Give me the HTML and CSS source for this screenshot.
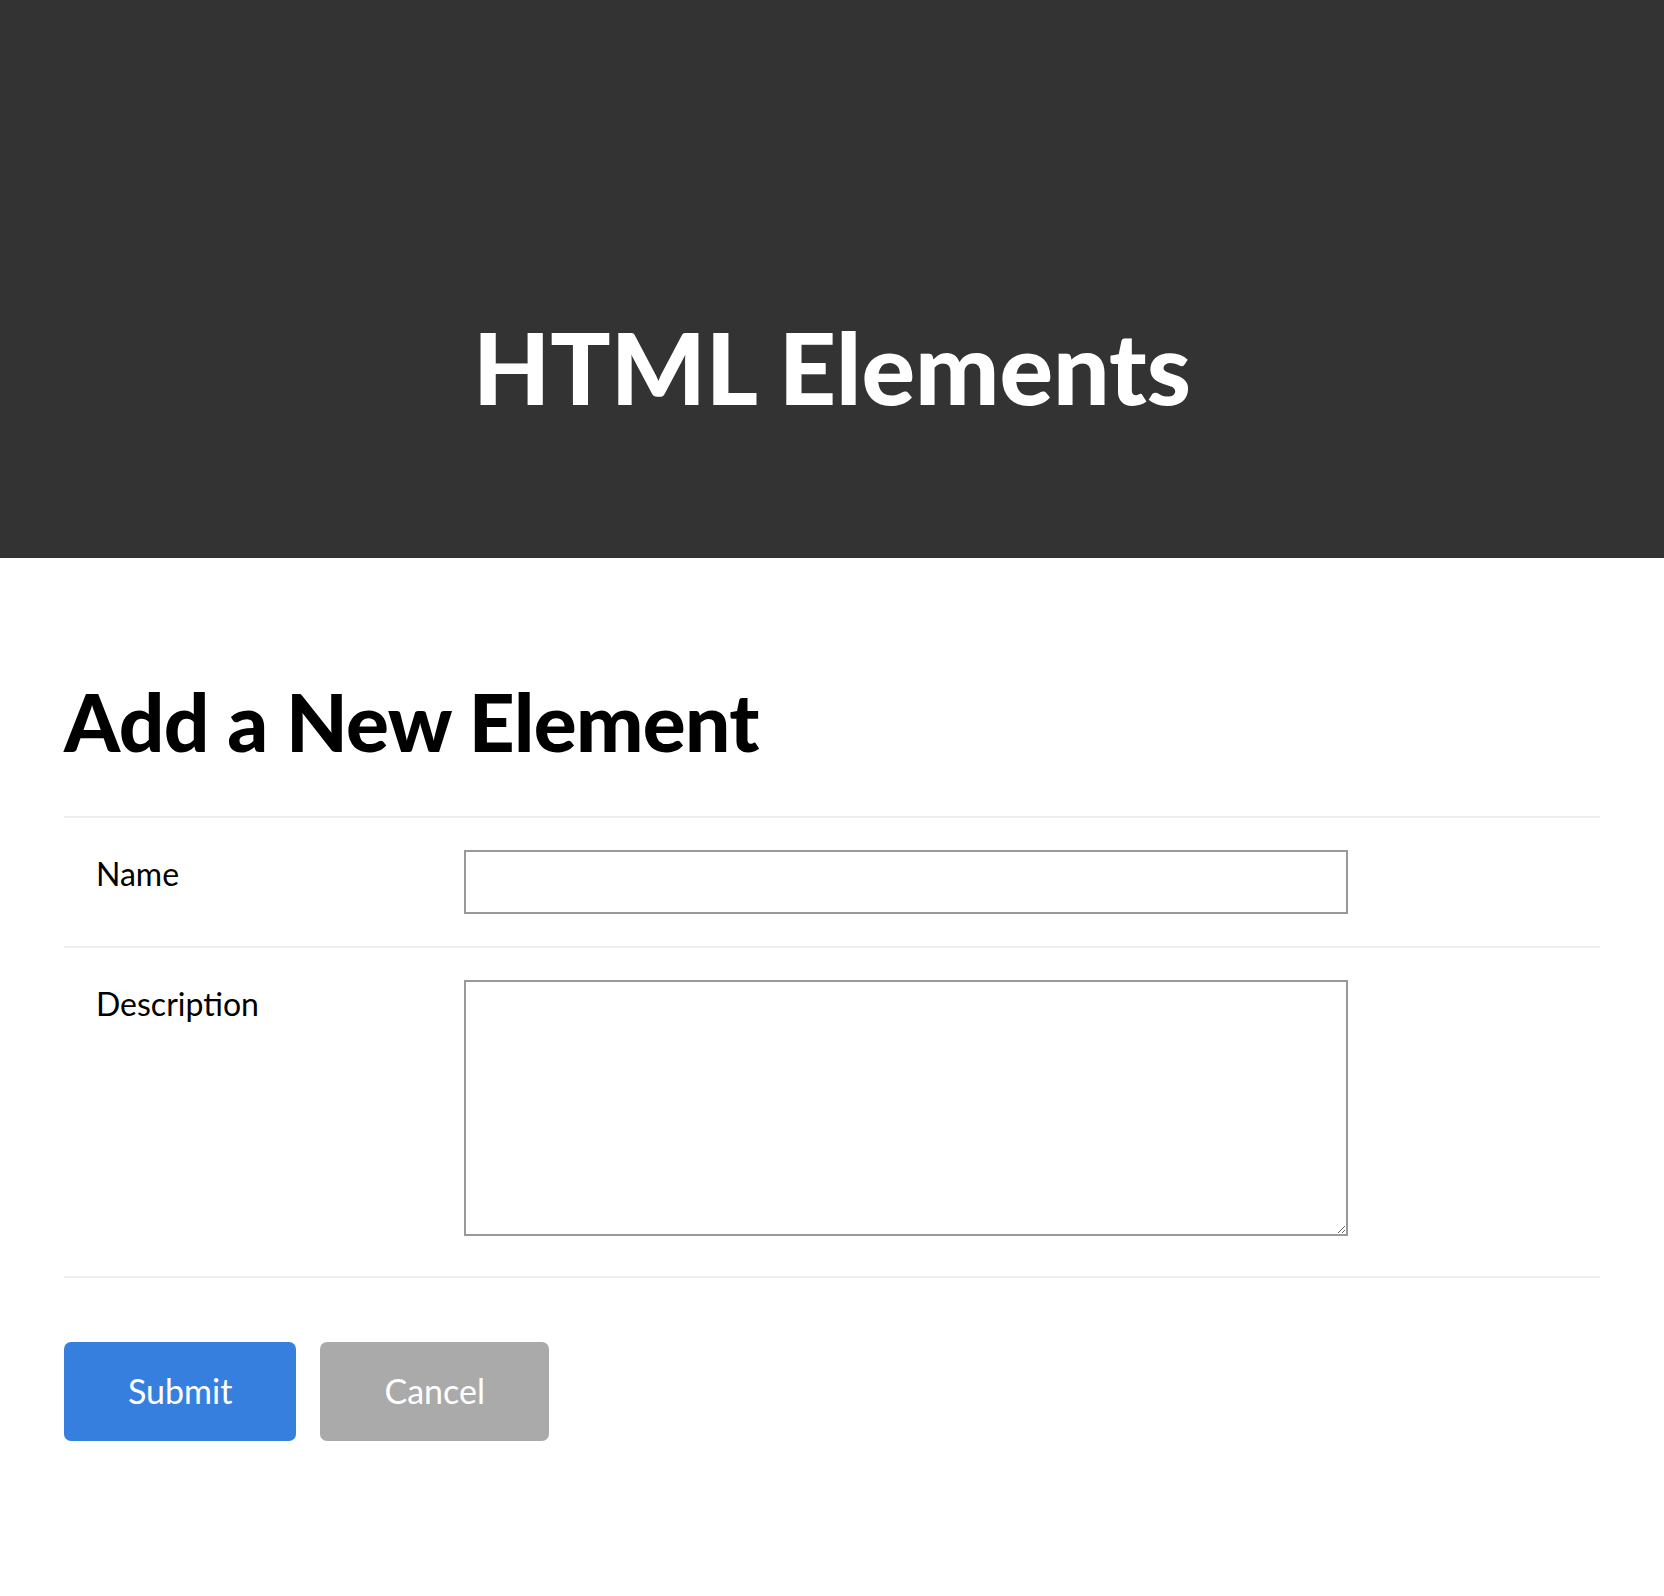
FILE: index.html
```html
<!DOCTYPE html>
<html lang="en">
  <head>
    <meta charset="UTF-8" />
    <meta name="viewport" content="width=device-width, initial-scale=1.0" />
    <title>HTML Elements</title>
    <link rel="stylesheet" href="styles.css">
  </head>
  <body>
    <header class="site-header">
      <h1>HTML Elements</h1>
    </header>
    <main class="content">
      <h2>Add a New Element</h2>
      <form id="elementForm">
        <div class="form-row">
          <label for="name">Name</label>
          <input type="text" id="name" name="name" />
        </div>
        <div class="form-row">
          <label for="description">Description</label>
          <textarea id="description" name="description"></textarea>
        </div>
        <div class="form-actions">
          <button type="submit" class="btn btn-submit">Submit</button>
          <button type="button" class="btn btn-cancel">Cancel</button>
        </div>
      </form>
    </main>
  </body>
</html>
```

FILE: styles.css
```css
body {
  font-family: Lato, "Open Sans", Arial, sans-serif;
  background-color: #fff;
  color: #000;
  margin: 0;
  padding: 0;
}

.site-header {
  background-color: #333;
  color: #fff;
  height: 558px;
  box-sizing: border-box;
  padding-top: 306px;
  text-align: center;
}

.site-header h1 {
  margin: 0;
  font-size: 100px;
  font-weight: 900;
  line-height: 1.2;
}

.content {
  padding: 0 64px;
}

.content h2 {
  margin: 115px 0 47px;
  font-size: 80px;
  font-weight: 900;
  line-height: 1.2;
  letter-spacing: -0.6px;
}

.form-row {
  display: grid;
  grid-template-columns: 368px 884px;
  align-items: start;
  padding: 32px 0 32px 32px;
  border-top: 2px solid #eee;
}

.form-row label {
  font-size: 32px;
  line-height: 1.5;
}

.form-row input[type="text"],
.form-row textarea {
  display: block;
  width: 100%;
  box-sizing: border-box;
  border: 2px solid #999;
  border-radius: 0;
  font-family: inherit;
  font-size: 24px;
  padding: 8px;
}

.form-row input[type="text"] {
  height: 64px;
}

.form-row textarea {
  height: 256px;
  margin-bottom: 8px;
}

.form-actions {
  display: flex;
  gap: 24px;
  padding-top: 64px;
  border-top: 2px solid #eee;
}

.btn {
  height: 99px;
  padding: 0 64px 3px;
  border: none;
  border-radius: 7px;
  color: #fff;
  font-family: inherit;
  font-size: 34px;
  cursor: pointer;
}

.btn-submit {
  background-color: #377fdf;
}

.btn-cancel {
  background-color: #aaa;
}
```
